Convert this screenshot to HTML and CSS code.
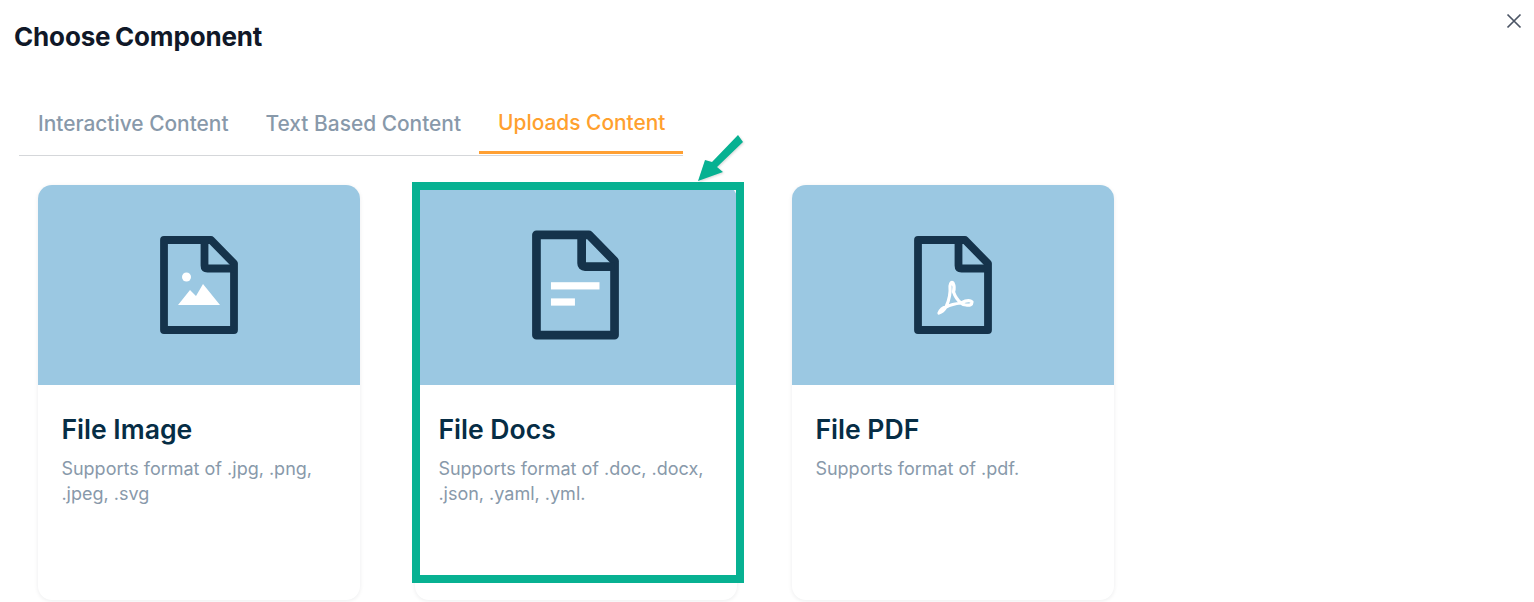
FILE: index.html
```html
<!DOCTYPE html>
<html lang="en">
<head>
<meta charset="utf-8">
<title>Choose Component</title>
<link rel="stylesheet" href="styles.css">
</head>
<body>
<main class="modal">
  <header class="modal-head">
    <h1 class="modal-title">Choose Component</h1>
    <svg class="close" viewBox="0 0 16 16" width="16" height="16"><path d="M1.5 1.5 14.5 14.5M14.5 1.5 1.5 14.5"/></svg>
  </header>
  <nav class="tabs">
    <span class="tab">Interactive Content</span>
    <span class="tab">Text Based Content</span>
    <span class="tab tab-active">Uploads Content</span>
  </nav>
  <section class="cards">
    <article class="card">
      <div class="thumb">
        <svg class="file" viewBox="0 0 78 98" width="78" height="98">
          <path class="outline" d="M4 4H51L74 27.500V94H4Z"/><path class="outline" d="M44.500 4V29.500Q44.500 32.500 47.500 32.500H74"/>
          <circle class="mark" cx="26.500" cy="41" r="4.500"/>
          <path class="mark" d="M18 69 30 54 36 60 43 48 60 69Z"/>
        </svg>
      </div>
      <div class="card-body">
        <h2 class="card-title">File Image</h2>
        <p class="card-desc">Supports format of .jpg, .png, .jpeg, .svg</p>
      </div>
    </article>
    <article class="card">
      <div class="thumb">
        <svg class="file" viewBox="0 0 78 98" width="87" height="110">
          <path class="outline" d="M4 4H51L74 27.500V94H4Z"/><path class="outline" d="M44.500 4V29.500Q44.500 32.500 47.500 32.500H74"/>
          <rect class="mark" x="17" y="46.500" width="43.500" height="6.500"/>
          <rect class="mark" x="17" y="61" width="21.500" height="6.500"/>
        </svg>
      </div>
      <div class="card-body">
        <h2 class="card-title">File Docs</h2>
        <p class="card-desc">Supports format of .doc, .docx, .json, .yaml, .yml.</p>
      </div>
    </article>
    <article class="card">
      <div class="thumb">
        <svg class="file" viewBox="0 0 78 98" width="78" height="98">
          <path class="outline" d="M4 4H51L74 27.500V94H4Z"/><path class="outline" d="M44.500 4V29.500Q44.500 32.500 47.500 32.500H74"/>
          <path class="pdf" d="M25 77Q27 72 32 71Q37 60 36 50Q37 45 39 47Q41 51 39.500 56Q42 63 47 67Q55 63 58 66Q58 70 52 69Q49 69 47 67Q38 68 32 71Q29 76 25 77Z"/>
        </svg>
      </div>
      <div class="card-body">
        <h2 class="card-title">File PDF</h2>
        <p class="card-desc">Supports format of .pdf.</p>
      </div>
    </article>
  </section>
</main>
<div class="highlight"></div>
<svg class="arrow" viewBox="0 0 50 50" width="50" height="50"><path d="M42 2 47 9 21 34 27 39 2 48 9 27 16 29Z"/></svg>
</body>
</html>
```
FILE: styles.css
```css
* { box-sizing: border-box; }
html, body { margin: 0; height: 602px; overflow: hidden; background: #fff; }
body { font-family: Inter, "Liberation Sans", sans-serif; position: relative; }
.modal { padding: 0 0 0 19px; }
.modal-head { display: flex; justify-content: space-between; padding: 21px 12px 0 0; height: 100px; margin-left: -5px; }
.modal-title { margin: 0; font-size: 26px; line-height: 32px; font-weight: 700; letter-spacing: -0.15px; word-spacing: -1.500px; color: #101828; }
.close { margin-top: -8px; fill: none; stroke: #4b5565; stroke-width: 1.700; }
.tabs { display: flex; width: 664px; height: 56px; border-bottom: 1px solid #d5d7da; }
.tab { flex: none; white-space: nowrap; padding: 11px 18px 0 19px; font-size: 20.900px; line-height: 26px; font-weight: 500; color: #8899aa; }
.tab-active { padding-top: 10px; height: 54px; color: #ffa02e; border-bottom: 3px solid #ffa033; }
.cards { display: flex; gap: 55.500px; margin: 29px 0 0 19px; }
.card { width: 321.500px; height: 415px; border-radius: 14px; overflow: hidden; background: #fff; box-shadow: 0 1px 4px rgba(16, 24, 40, 0.08); }
.thumb { height: 200px; background: #9bc8e2; display: flex; align-items: center; justify-content: center; }
.outline { fill: none; stroke: #15334b; stroke-width: 7.800; stroke-linejoin: round; }
.mark { fill: #fff; }
.pdf { fill: none; stroke: #fff; stroke-width: 3.200; stroke-linejoin: round; stroke-linecap: round; }
.card-body { padding: 27px 24px 0 23.400px; }
.card-title { margin: 0; font-size: 26.600px; line-height: 34px; font-weight: 600; color: #062d45; }
.card-desc { margin: 10px 0 0; font-size: 18px; line-height: 25px; font-weight: 400; color: #8899aa; }
.highlight { position: absolute; left: 412px; top: 182px; width: 332px; height: 401px; border: 8px solid #07b192; }
.arrow { position: absolute; left: 696px; top: 133px; fill: #07b192; filter: drop-shadow(1px 1px 1px rgba(0, 0, 0, 0.15)); }
```
